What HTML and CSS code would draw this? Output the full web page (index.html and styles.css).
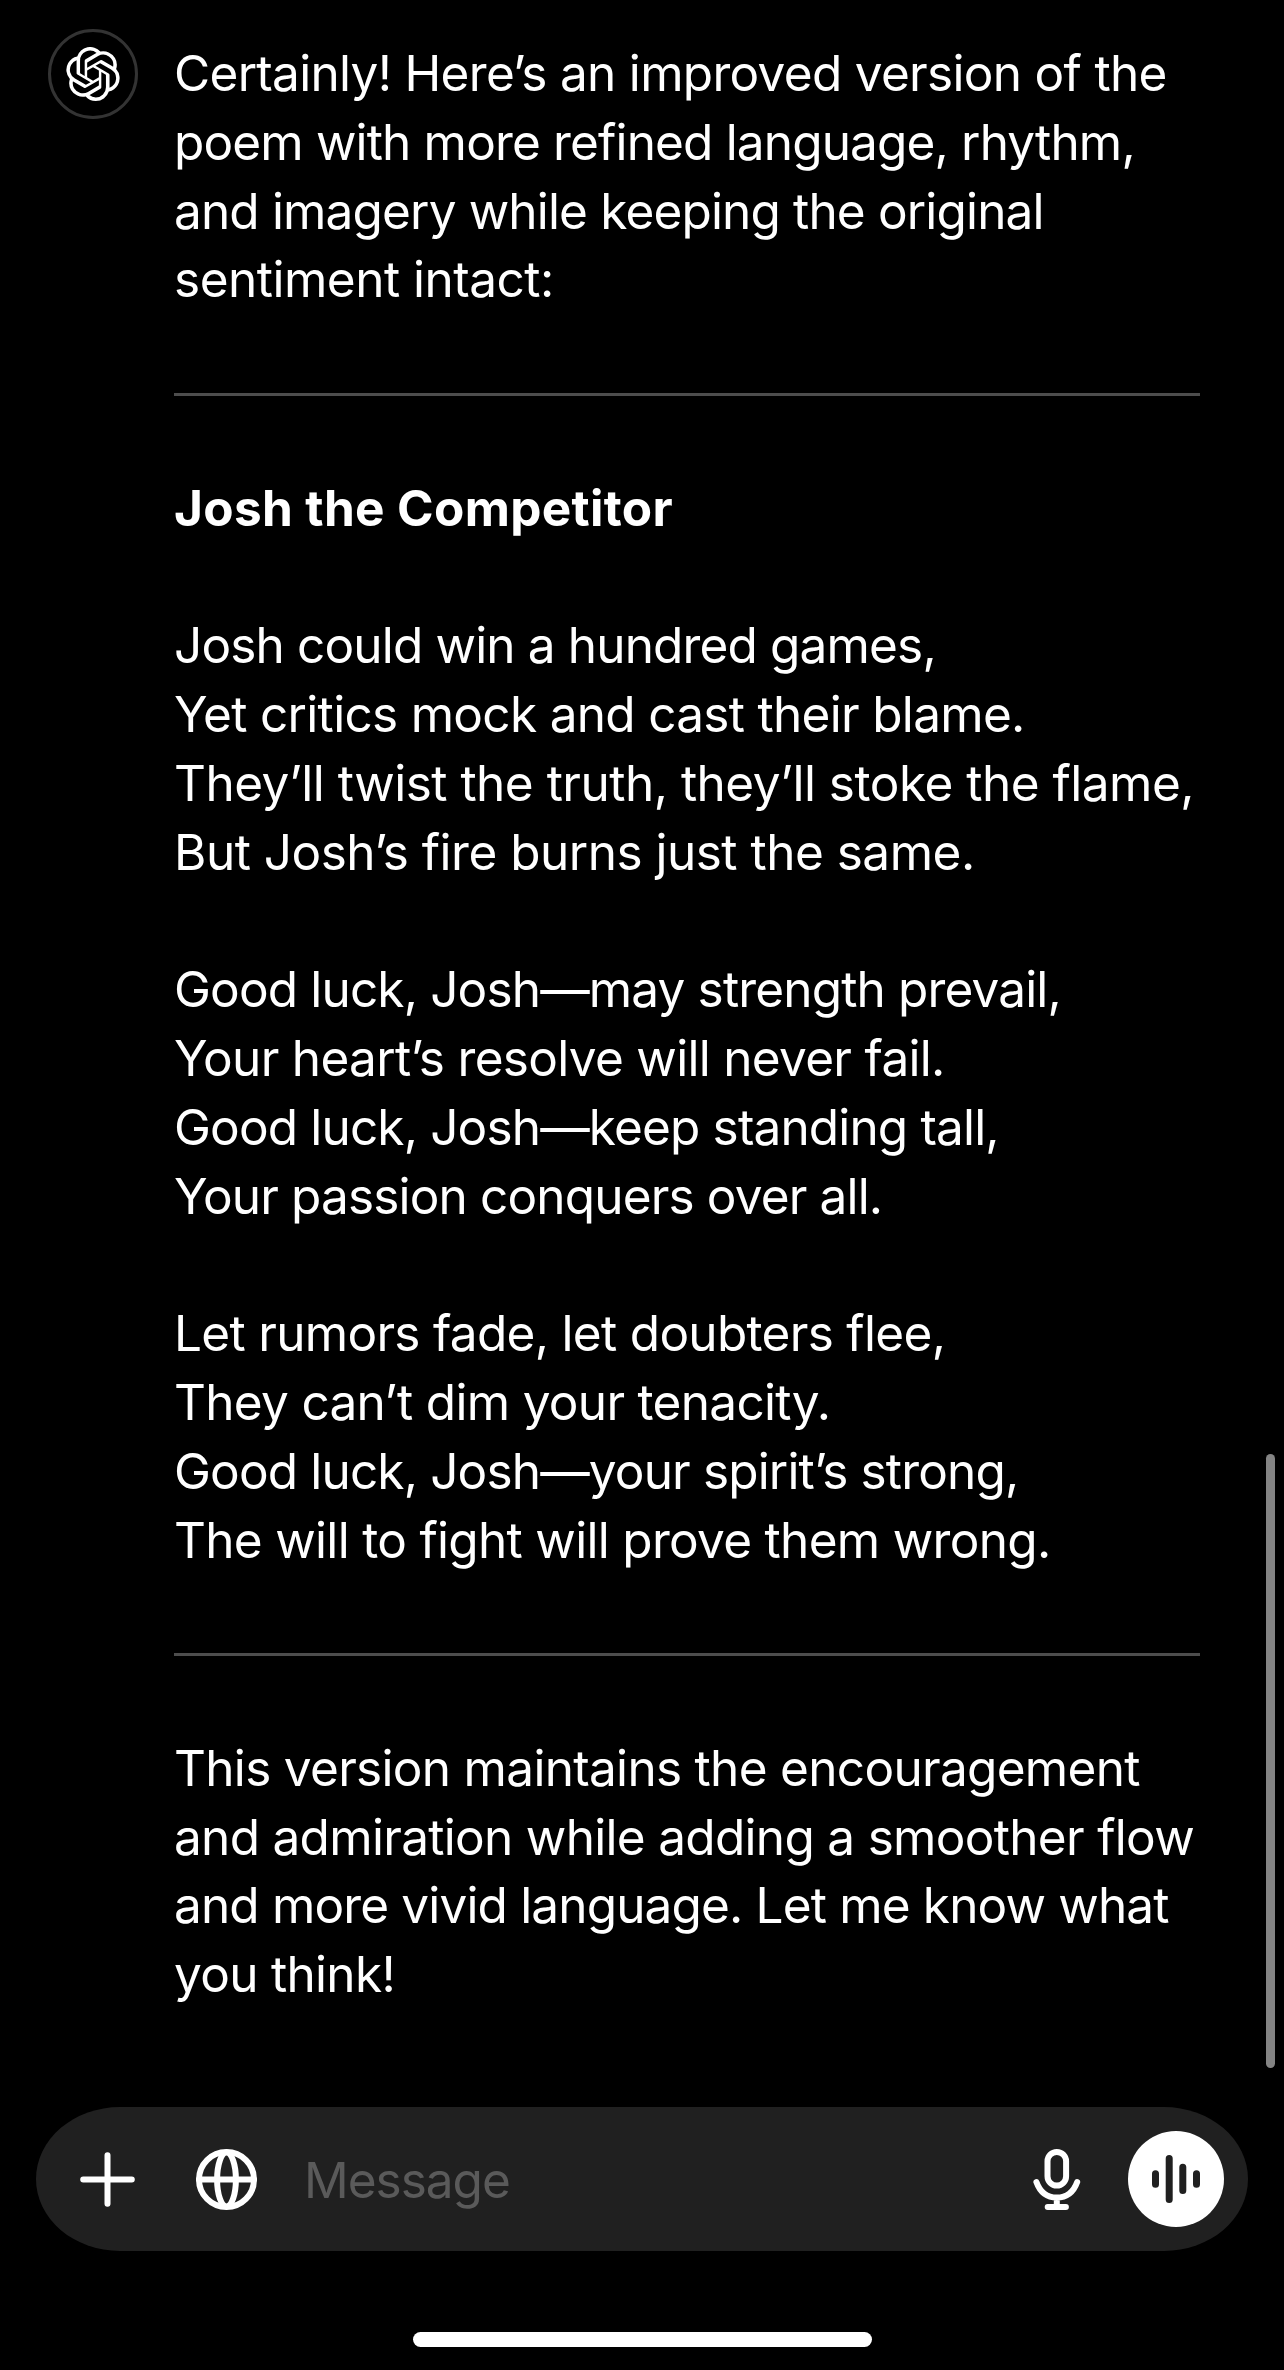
FILE: index.html
```html
<!DOCTYPE html>
<html lang="en">

<head>
    <meta charset="UTF-8">
    <meta name="viewport" content="width=device-width, initial-scale=1.0">
    <title>Chat</title>
    <link rel="stylesheet" href="styles.css">
</head>

<body>
    <div class="screen">
        <div class="chat">
            <div class="avatar">
                <svg class="logo" viewBox="0 0 24 24" fill="currentColor">
                    <path d="M22.2819 9.8211a5.9847 5.9847 0 0 0-.5157-4.9108 6.0462 6.0462 0 0 0-6.5098-2.9A6.0651 6.0651 0 0 0 4.9807 4.1818a5.9847 5.9847 0 0 0-3.9977 2.9 6.0462 6.0462 0 0 0 .7427 7.0966 5.98 5.98 0 0 0 .511 4.9107 6.051 6.051 0 0 0 6.5146 2.9001A5.9847 5.9847 0 0 0 13.2599 24a6.0557 6.0557 0 0 0 5.7718-4.2058 5.9894 5.9894 0 0 0 3.9977-2.9001 6.0557 6.0557 0 0 0-.7475-7.0729zm-9.022 12.6081a4.4755 4.4755 0 0 1-2.8764-1.0408l.1419-.0804 4.7783-2.7582a.7948.7948 0 0 0 .3927-.6813v-6.7369l2.02 1.1686a.071.071 0 0 1 .038.052v5.5826a4.504 4.504 0 0 1-4.4945 4.4944zm-9.6607-4.1254a4.4708 4.4708 0 0 1-.5346-3.0137l.142.0852 4.783 2.7582a.7712.7712 0 0 0 .7806 0l5.8428-3.3685v2.3324a.0804.0804 0 0 1-.0332.0615L9.74 19.9502a4.4992 4.4992 0 0 1-6.1408-1.6464zM2.3408 7.8956a4.485 4.485 0 0 1 2.3655-1.9728V11.6a.7664.7664 0 0 0 .3879.6765l5.8144 3.3543-2.0201 1.1685a.0757.0757 0 0 1-.071 0l-4.8303-2.7865A4.504 4.504 0 0 1 2.3408 7.872zm16.5963 3.8558L13.1038 8.364 15.1192 7.2a.0757.0757 0 0 1 .071 0l4.8303 2.7913a4.4944 4.4944 0 0 1-.6765 8.1042v-5.6772a.79.79 0 0 0-.407-.667zm2.0107-3.0231l-.142-.0852-4.7735-2.7818a.7759.7759 0 0 0-.7854 0L9.409 9.2297V6.8974a.0662.0662 0 0 1 .0284-.0615l4.8303-2.7866a4.4992 4.4992 0 0 1 6.6802 4.66zM8.3065 12.863l-2.02-1.1638a.0804.0804 0 0 1-.038-.0567V6.0742a4.4992 4.4992 0 0 1 7.3757-3.4537l-.142.0805L8.704 5.459a.7948.7948 0 0 0-.3927.6813zm1.0976-2.3654l2.602-1.4998 2.6069 1.4998v2.9994l-2.5974 1.4997-2.6067-1.4997Z"/>
                </svg>
            </div>
            <div class="message">
                <p>Certainly! Here’s an improved version of the<br>
                    <span class="tight">poem with more refined language, rhythm,</span><br>
                    <span class="tight">and imagery while keeping the original</span><br>
                    <span class="loose">sentiment intact:</span></p>
                <hr>
                <h1>Josh the Competitor</h1>
                <p><span class="tight">Josh could win a hundred games,</span><br>
                    Yet critics mock and cast their blame.<br>
                    <span class="loose">They’ll twist the truth, they’ll stoke the flame,</span><br>
                    <span class="loose">But Josh’s fire burns just the same.</span></p>
                <p><span class="tight">Good luck, Josh—may strength prevail,</span><br>
                    Your heart’s resolve will never fail.<br>
                    <span class="tight">Good luck, Josh—keep standing tall,</span><br>
                    <span class="tight">Your passion conquers over all.</span></p>
                <p>Let rumors fade, let doubters flee,<br>
                    They can’t dim your tenacity.<br>
                    <span class="tight">Good luck, Josh—your spirit’s strong,</span><br>
                    The will to fight will prove them wrong.</p>
                <hr>
                <p>This version maintains the encouragement<br>
                    and admiration while adding a smoother flow<br>
                    <span class="tight">and more vivid language. Let me know what</span><br>
                    you think!</p>
            </div>
        </div>

        <div class="composer">
            <svg class="plus" viewBox="0 0 55 55">
                <path d="M3.2 27.5h48.6M27.5 3.2v48.6"/>
            </svg>
            <svg class="globe" viewBox="0 0 61 61">
                <circle cx="30.5" cy="30.5" r="27.5"/>
                <ellipse cx="30.5" cy="30.5" rx="9.4" ry="27"/>
                <path d="M3 30.5h55"/>
            </svg>
            <div class="placeholder">Message</div>
            <svg class="mic" viewBox="0 0 48 61">
                <rect x="14.5" y="3" width="18.6" height="33.6" rx="9.3"/>
                <path d="M3.4 33C7 43 14 48.6 23.8 48.6S40.6 43 44.2 33M23.8 49v9M14.7 58h18.2"/>
            </svg>
            <div class="voice">
                <svg viewBox="0 0 96 96">
                    <path d="M27.5 42.8v10.4M41.2 27.5v41M54.8 36.2v23.3M68.5 42.8v10.4"/>
                </svg>
            </div>
        </div>

        <div class="home"></div>
        <div class="scrollbar"></div>
    </div>
</body>

</html>
```

FILE: styles.css
```css
* {
    box-sizing: border-box;
}

body {
    margin: 0;
    background-color: #000;
    color: #fff;
    font-family: Inter, "Liberation Sans", sans-serif;
}

.screen {
    position: relative;
    width: 1284px;
    height: 2370px;
    padding: 29px 36px 23px;
    display: flex;
    flex-direction: column;
    overflow: hidden;
}

.chat {
    flex: 1;
    display: flex;
    gap: 36px;
    padding-left: 12px;
}

.avatar {
    width: 90px;
    height: 90px;
    flex-shrink: 0;
    display: flex;
    justify-content: center;
    align-items: center;
    border: 3px solid #333;
    border-radius: 50%;
}

.logo {
    width: 54px;
    height: 54px;
}

.message {
    width: 1026px;
    padding-top: 10px;
    font-size: 49.5px;
    line-height: 68.75px;
    letter-spacing: -0.69px;
    white-space: nowrap;
}

.message p,
.message h1 {
    margin: 0 0 69px;
    font-size: inherit;
}

.message h1 {
    font-weight: 700;
    letter-spacing: 0.35px;
}

.message hr {
    height: 3px;
    margin: 79px 0 77.5px;
    border: 0;
    background-color: #4d4d4d;
}

.message .tight {
    letter-spacing: -0.84px;
}

.message .loose {
    letter-spacing: -0.5px;
}

.composer {
    height: 144px;
    padding: 0 24px 0 44px;
    display: flex;
    align-items: center;
    background-color: #202020;
    border-radius: 84px / 72px;
}

.composer svg {
    fill: none;
    stroke: #fff;
    stroke-width: 6;
    stroke-linecap: round;
}

.plus {
    width: 55px;
    height: 55px;
}

.globe {
    width: 61px;
    height: 61px;
    margin-left: 61px;
}

.placeholder {
    flex: 1;
    margin-left: 47px;
    padding-top: 2px;
    font-size: 49.5px;
    letter-spacing: -1px;
    color: #5a5a5a;
}

.mic {
    width: 48px;
    height: 61px;
    margin-right: 47px;
}

.voice {
    width: 96px;
    height: 96px;
    background-color: #fff;
    border-radius: 50%;
}

.composer .voice svg {
    display: block;
    stroke: #202020;
    stroke-width: 7;
}

.home {
    width: 459px;
    height: 15px;
    margin: 81px auto 0;
    background-color: #fff;
    border-radius: 8px;
}

.scrollbar {
    position: absolute;
    top: 1454px;
    right: 9px;
    width: 9px;
    height: 614px;
    background-color: #848484;
    border-radius: 5px;
}
```
